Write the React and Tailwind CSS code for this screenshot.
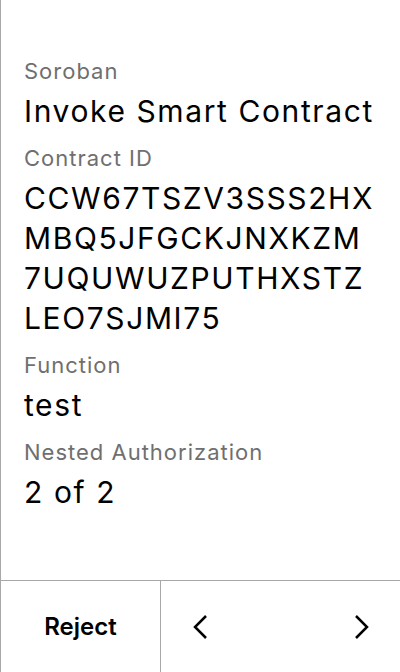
export default function App() {
    const items = [
        { label: 'Soroban', lines: ['Invoke Smart Contract'] },
        { label: 'Contract ID', lines: ['CCW67TSZV3SSS2HX', 'MBQ5JFGCKJNXKZM', '7UQUWUZPUTHXSTZ', 'LEO7SJMI75'] },
        { label: 'Function', lines: ['test'] },
        { label: 'Nested Authorization', lines: ['2 of 2'] },
    ]

    return (
        <div
            className="w-[400px] h-[672px] flex flex-col bg-white border-l border-[#a8a8a8] text-black"
            style={{ fontFamily: 'Inter, "Noto Sans", sans-serif' }}
        >
            <div className="flex-1 flex flex-col gap-[13px] pl-[23px] pr-2 pt-[57px]">
                {items.map((item) => (
                    <div key={item.label}>
                        <div className="text-[22px] leading-[28px] tracking-[1px] text-[#6f6f6f]">{item.label}</div>
                        <div className="mt-[6px] text-[30px] leading-[40px] tracking-[1.6px] whitespace-nowrap">
                            {item.lines.map((line) => (
                                <div key={line}>{line}</div>
                            ))}
                        </div>
                    </div>
                ))}
            </div>
            <div className="h-[92px] flex border-t border-[#a8a8a8]">
                <button
                    type="button"
                    className="w-[160px] flex items-center justify-center text-[24px] font-semibold border-r border-[#a8a8a8]"
                >
                    Reject
                </button>
                <div className="flex-1 flex items-center justify-between pl-[32px] pr-[31px]">
                    <svg width="14" height="24" viewBox="0 0 14 24" fill="none" stroke="black" strokeWidth="2.5">
                        <path d="M13 1L2 12l11 11" />
                    </svg>
                    <svg width="14" height="24" viewBox="0 0 14 24" fill="none" stroke="black" strokeWidth="2.5">
                        <path d="M1 1l11 11L1 23" />
                    </svg>
                </div>
            </div>
        </div>
    )
}
